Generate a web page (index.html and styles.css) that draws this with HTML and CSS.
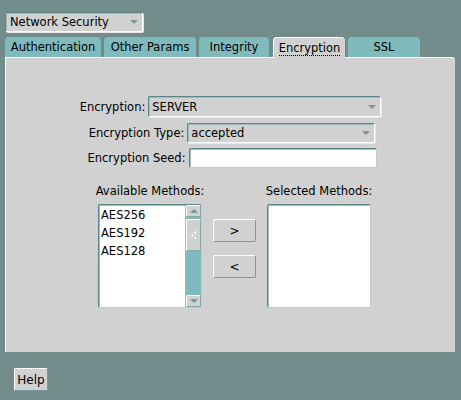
FILE: index.html
```html
<!DOCTYPE html>
<html>
<head>
  <title>Network Security</title>
  <link rel="stylesheet" href="styles.css">
</head>
<body>
  <div class="top">
    <div class="combo combo-top">
      <span>Network Security</span>
      <span class="arrow"></span>
    </div>
  </div>

  <div class="tabs">
    <div class="tab tab-auth">Authentication</div>
    <div class="tab tab-other">Other Params</div>
    <div class="tab tab-integrity">Integrity</div>
    <div class="tab tab-enc selected"><span class="focus">Encryption</span></div>
    <div class="tab tab-ssl">SSL</div>
  </div>

  <div class="panel">
    <div class="row row-enc">
      <label>Encryption:</label>
      <div class="combo combo-enc">
        <span>SERVER</span>
        <span class="arrow"></span>
      </div>
    </div>
    <div class="row row-type">
      <label>Encryption Type:</label>
      <div class="combo combo-type">
        <span>accepted</span>
        <span class="arrow"></span>
      </div>
    </div>
    <div class="row row-seed">
      <label>Encryption Seed:</label>
      <div class="field"></div>
    </div>

    <div class="methods">
      <div class="caption">Available Methods:</div>
      <div></div>
      <div class="caption">Selected Methods:</div>

      <div class="list">
        <div class="items">
          <div>AES256</div>
          <div>AES192</div>
          <div>AES128</div>
        </div>
        <div class="scrollbar">
          <div class="sb-btn"><span class="tri up"></span></div>
          <div class="thumb"><span class="grip"></span></div>
          <div class="track"></div>
          <div class="sb-btn"><span class="tri down"></span></div>
        </div>
      </div>
      <div class="movers">
        <button class="btn">&gt;</button>
        <button class="btn">&lt;</button>
      </div>
      <div class="list"></div>
    </div>
  </div>

  <div class="bottom">
    <button class="btn help">Help</button>
  </div>
</body>
</html>
```

FILE: styles.css
```css
/* Oracle look and feel */
body {
  margin: 0;
  padding: 0;
  width: 461px;
  height: 400px;
  background-color: #718c8b;
  font-family: 'DejaVu Sans', sans-serif;
  font-size: 11.5px;
  color: #000;
  overflow: hidden;
}

.top {
  padding: 12px 0 0 5px;
}

.combo {
  box-sizing: border-box;
  height: 20px;
  display: flex;
  align-items: center;
  justify-content: space-between;
  padding: 0 4px 0 3px;
  background-color: #d1d1d1;
  border: 1px solid #5d8686;
  border-right-color: #ffffff;
  border-bottom-color: #ffffff;
  box-shadow: inset 1px 1px 0 #9fbcbc, 1px 1px 0 #e8e8e8;
  border-radius: 2px;
}

.combo-top {
  width: 138px;
  padding-left: 4px;
}

.arrow {
  width: 0;
  height: 0;
  border-left: 4px solid transparent;
  border-right: 4px solid transparent;
  border-top: 4px solid #7a9a9a;
}

.tabs {
  display: flex;
  margin-top: 5px;
  padding-left: 5px;
  height: 20px;
}

.tab {
  box-sizing: border-box;
  height: 20px;
  background-color: #7fbbbd;
  border-radius: 4px 4px 0 0;
  display: flex;
  align-items: center;
  justify-content: center;
  margin-right: 3px;
}

.tab-auth { width: 96px; }
.tab-other { width: 92px; }
.tab-integrity { width: 70px; margin-right: 4px; }
.tab-enc { width: 72px; }
.tab-ssl { width: 72px; }

.tab.selected {
  background-color: #d1d1d1;
  border-top: 1px solid #ffffff;
  border-left: 1px solid #ffffff;
  height: 21px;
  position: relative;
  z-index: 1;
}

.focus {
  border-bottom: 1px dotted #000;
  line-height: 14px;
}

.panel {
  box-sizing: border-box;
  width: 450px;
  height: 295px;
  margin-left: 5px;
  background-color: #d1d1d1;
  border-top: 1px solid #ffffff;
  border-left: 1px solid #ffffff;
  border-radius: 0 3px 0 0;
  padding-top: 38px;
}

.row {
  display: flex;
  justify-content: center;
  align-items: center;
  height: 20px;
}

.row label {
  margin-right: 3px;
}

.row-enc { height: 21px; }
.row-enc .combo { height: 21px; }
.row-type { margin-top: 6px; padding-left: 3px; }
.row-seed { margin-top: 5px; padding-left: 3px; }

.combo-enc { width: 233px; }
.combo-type { width: 188px; }

.field {
  box-sizing: border-box;
  width: 188px;
  height: 20px;
  background-color: #ffffff;
  border: 1px solid #5d8686;
  border-right-color: #c8c8c8;
  border-bottom-color: #c8c8c8;
  box-shadow: inset 1px 1px 0 #9fbcbc;
  border-radius: 2px;
}

.methods {
  display: grid;
  grid-template-columns: 104px 43px 104px;
  column-gap: 11px;
  margin: 16px 0 0 92px;
}

.caption {
  display: flex;
  justify-content: center;
  white-space: nowrap;
  height: 20px;
}

.list {
  box-sizing: border-box;
  height: 104px;
  background-color: #ffffff;
  border: 1px solid #5d8686;
  border-right-color: #c8c8c8;
  border-bottom-color: #c8c8c8;
  box-shadow: inset 1px 1px 0 #9fbcbc;
  border-radius: 2px;
  display: flex;
}

.items {
  flex: 1;
  padding: 1px 0 0 2px;
}

.items div {
  height: 18px;
  line-height: 18px;
}

.scrollbar {
  width: 15px;
  display: flex;
  flex-direction: column;
  background-color: #7fbbbd;
  border-left: 1px solid #9fbcbc;
}

.sb-btn {
  box-sizing: border-box;
  height: 12px;
  background-color: #d1d1d1;
  border: 1px solid #ffffff;
  border-right-color: #8aa6a6;
  border-bottom-color: #8aa6a6;
  border-radius: 2px;
  display: flex;
  align-items: center;
  justify-content: center;
}

.tri {
  width: 0;
  height: 0;
  border-left: 4px solid transparent;
  border-right: 4px solid transparent;
}

.tri.up { border-bottom: 4px solid #7a9a9a; }
.tri.down { border-top: 4px solid #7a9a9a; }

.thumb {
  box-sizing: border-box;
  height: 32px;
  margin-top: 2px;
  background-color: #d1d1d1;
  border: 1px solid #ffffff;
  border-right-color: #8aa6a6;
  border-bottom-color: #8aa6a6;
  display: flex;
  align-items: center;
  justify-content: center;
}

.grip {
  width: 5px;
  height: 8px;
  background:
    radial-gradient(circle, #ffffff 1px, transparent 1.2px) 3px 0 / 3px 3px no-repeat,
    radial-gradient(circle, #ffffff 1px, transparent 1.2px) 0 3px / 3px 3px no-repeat,
    radial-gradient(circle, #ffffff 1px, transparent 1.2px) 3px 6px / 3px 3px no-repeat;
}

.track {
  flex: 1;
}

.movers {
  display: flex;
  flex-direction: column;
  padding-top: 15px;
  gap: 13px;
}

.btn {
  box-sizing: border-box;
  height: 23px;
  width: 43px;
  padding: 0;
  background-color: #d1d1d1;
  border: 1px solid #ffffff;
  border-right-color: #7a9a9a;
  border-bottom-color: #7a9a9a;
  border-radius: 2px;
  font-family: 'DejaVu Sans', sans-serif;
  font-size: 12px;
  color: #000;
}

.bottom {
  padding: 16px 0 0 14px;
}

.help {
  width: 34px;
}
```
